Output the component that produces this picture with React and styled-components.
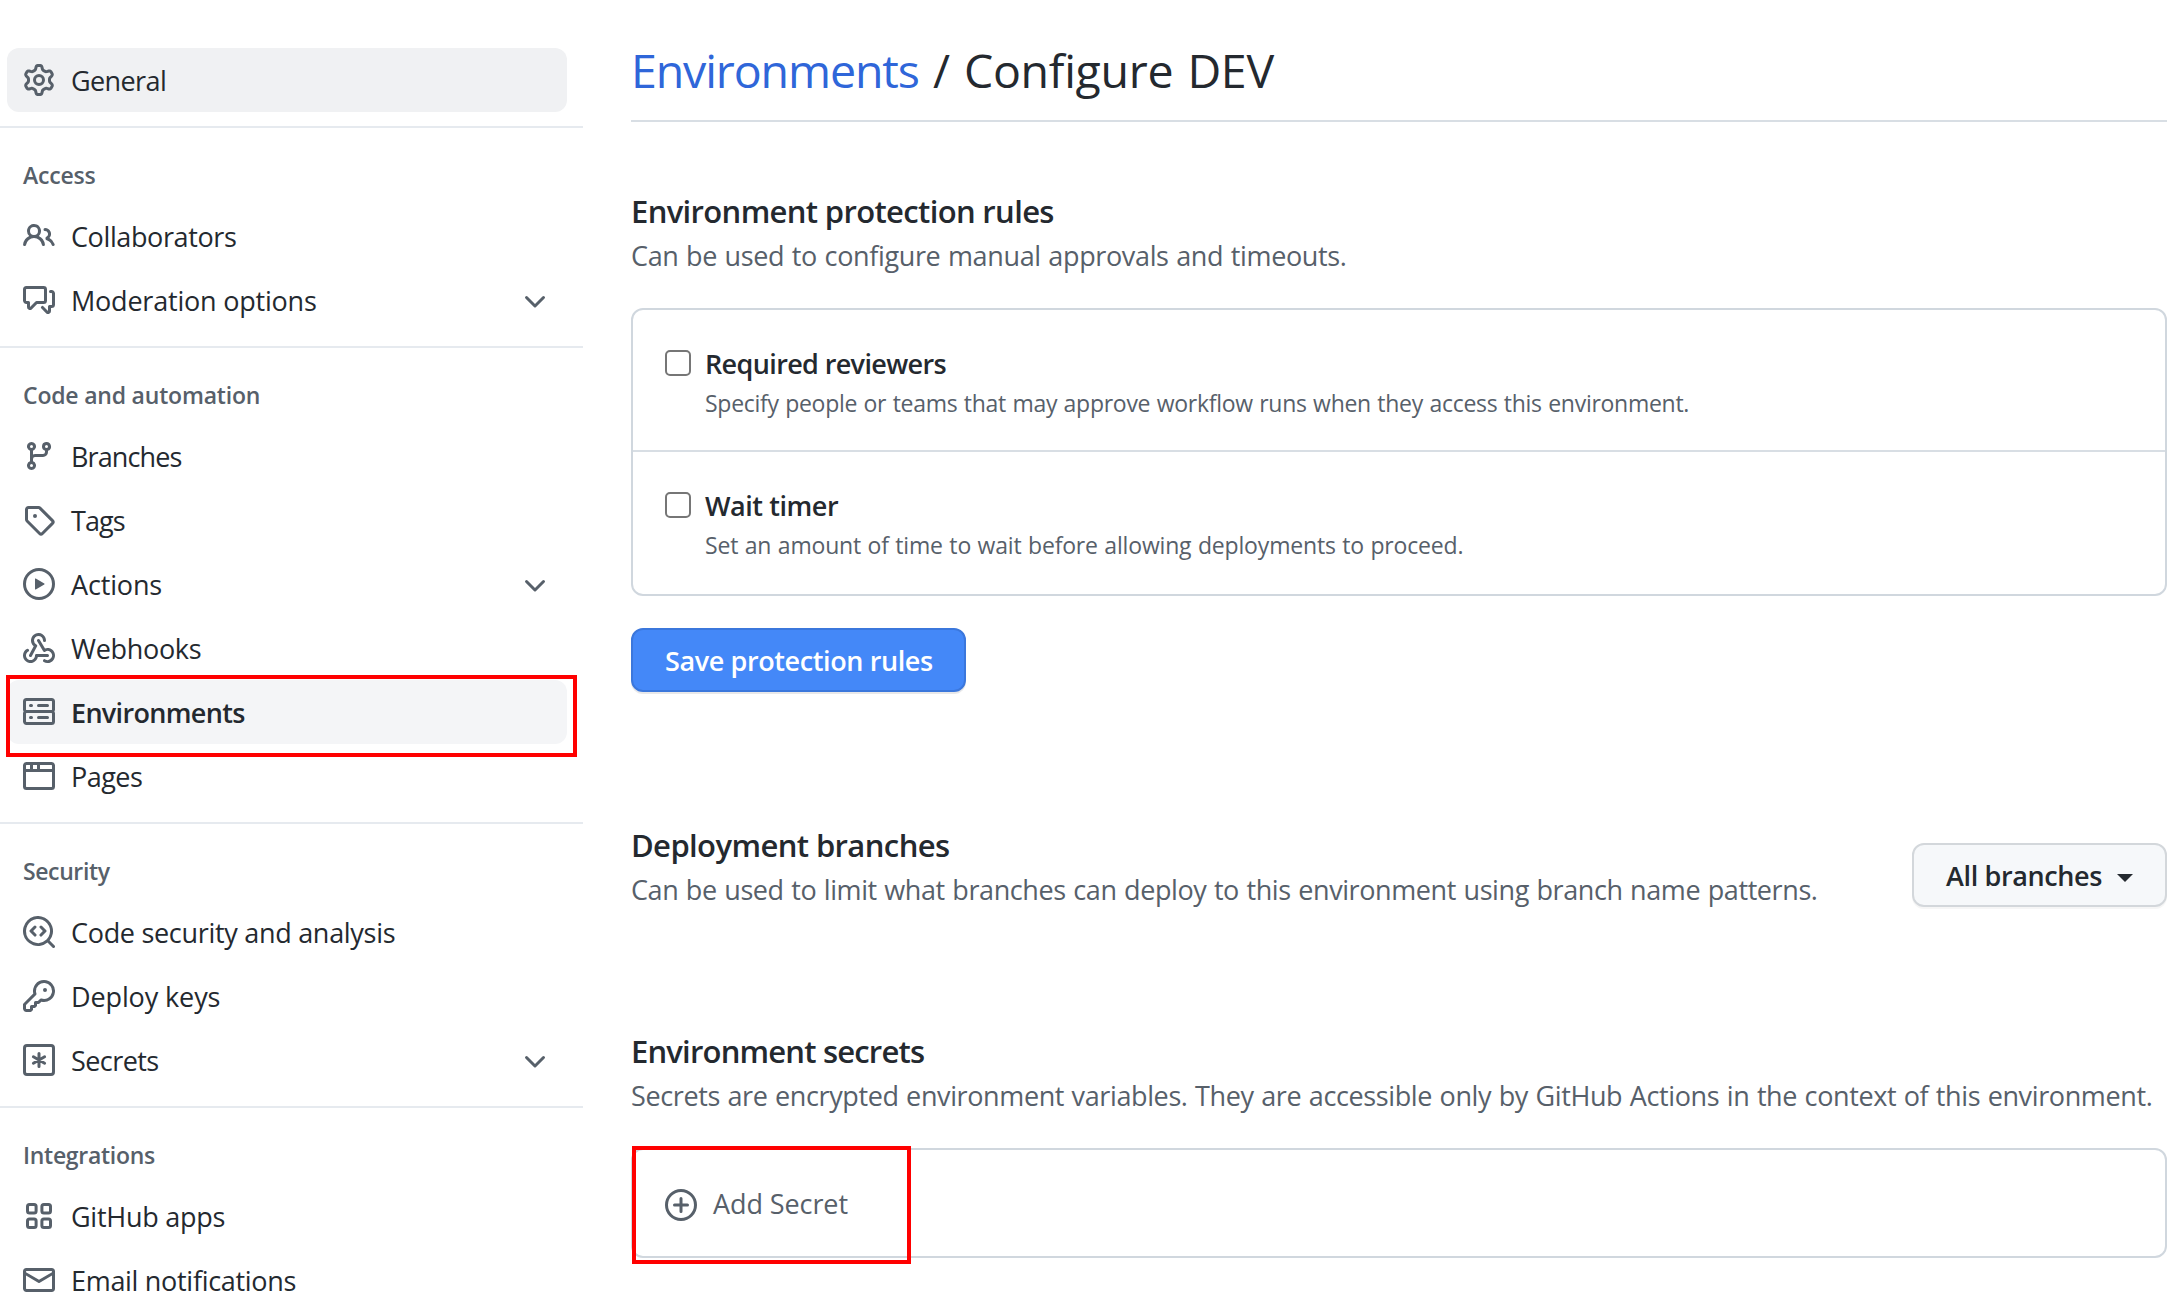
import React from 'react';
import styled, { createGlobalStyle, css } from 'styled-components';

const color = {
  text: '#24292f',
  muted: '#57606a',
  icon: '#57606a',
  border: '#d0d7de',
  divider: '#e6eaef',
  link: '#2f66d9',
  highlight: '#ff0000',
};

const GlobalStyle = createGlobalStyle`
  *, *::before, *::after { box-sizing: border-box; }
  html, body { margin: 0; padding: 0; background: #ffffff; overflow: hidden; }
  body {
    font-family: "Open Sans", "Noto Sans", sans-serif;
    font-size: 27px;
    color: ${color.text};
  }
`;

const Page = styled.div`
  display: grid;
  grid-template-columns: 583px 1fr;
  column-gap: 48px;
  height: 1307px;
  padding-right: 16px;
  overflow: hidden;
`;

/* ---------- Sidebar ---------- */

const Sidebar = styled.nav`
  padding-top: 48px;
`;

const NavGroup = styled.section`
  padding-bottom: 14px;

  & + & {
    border-top: 2px solid ${color.divider};
  }
`;

const NavHeading = styled.h3`
  margin: 0;
  height: 76px;
  padding: 29px 0 0 23px;
  font-size: 23px;
  line-height: 36px;
  font-weight: 600;
  color: ${color.muted};
  letter-spacing: ${(p) => p.$tracking}px;
`;

const NavList = styled.ul`
  margin: 0;
  padding: 0 16px 0 7px;
  list-style: none;
`;

const NavItem = styled.li`
  position: relative;
  display: flex;
  align-items: center;
  gap: 16px;
  height: 64px;
  padding: 0 16px;
  border-radius: 12px;
  background: ${(p) => p.$background || 'transparent'};
  font-weight: ${(p) => (p.$bold ? 600 : 400)};
`;

const NavLabel = styled.span`
  flex: 1;
  line-height: 42px;
  padding-top: 1px;
  white-space: nowrap;
  letter-spacing: ${(p) => p.$tracking}px;
`;

const NavHighlight = styled.span`
  position: absolute;
  left: -1px;
  top: -5px;
  width: 571px;
  height: 82px;
  border: 4px solid ${color.highlight};
`;

const Svg = styled.svg`
  display: block;
  flex: none;
  width: 32px;
  height: 32px;
  fill: ${color.icon};
`;

const Stroked = styled.g`
  fill: none;
  stroke: ${color.icon};
  stroke-width: 1.5;
  stroke-linecap: round;
  stroke-linejoin: round;
`;

/* ---------- Main column ---------- */

const PageHeader = styled.header`
  padding: 34px 0 14px;
  border-bottom: 2px solid #d8dee4;
`;

const Title = styled.h1`
  margin: 0;
  font-size: 46.5px;
  line-height: 72px;
  font-weight: 400;
  white-space: pre;
  letter-spacing: -0.3px;
  word-spacing: 2.4px;
`;

const TitleLink = styled.a`
  color: ${color.link};
  letter-spacing: -1.12px;
`;

const Section = styled.section`
  margin-top: ${(p) => p.$top}px;
`;

const SplitSection = styled(Section)`
  display: flex;
  justify-content: space-between;
  align-items: flex-end;
`;

const SectionTitle = styled.h2`
  margin: 0;
  font-size: 31px;
  line-height: 48px;
  font-weight: 600;
  letter-spacing: ${(p) => p.$tracking}px;
`;

const Description = styled.p`
  margin: 0;
  line-height: 42px;
  color: ${color.muted};
  white-space: nowrap;
  letter-spacing: ${(p) => p.$tracking}px;
  word-spacing: 0.9px;
`;

const Card = styled.div`
  position: relative;
  margin-top: 31px;
  border: 2px solid ${color.border};
  border-radius: 12px;
`;

const Rule = styled.label`
  display: flex;
  gap: 14px;
  padding: 32px 32px 29px;

  & + & {
    padding-bottom: 31px;
    border-top: 2px solid #d8dee4;
  }
`;

const Checkbox = styled.input`
  appearance: none;
  flex: none;
  width: 26px;
  height: 26px;
  margin: 8px 0 0;
  border: 2px solid #767676;
  border-radius: 5px;
  background: #ffffff;
`;

const RuleName = styled.div`
  padding-top: 1px;
  line-height: 42px;
  font-weight: 600;
  letter-spacing: ${(p) => p.$tracking}px;
`;

const RuleNote = styled.div`
  font-size: 23px;
  line-height: 36px;
  color: ${color.muted};
  white-space: nowrap;
  letter-spacing: ${(p) => p.$tracking}px;
  word-spacing: 0.7px;
`;

const buttonBase = css`
  display: flex;
  align-items: center;
  height: 64px;
  padding: 2px 32px 0;
  border-radius: 12px;
  font-family: inherit;
  font-size: 27px;
  line-height: 42px;
  font-weight: 600;
  white-space: nowrap;
`;

const PrimaryButton = styled.button`
  ${buttonBase}
  width: 335px;
  margin-top: 32px;
  border: 2px solid #3b77dc;
  background: #4488f8;
  color: #ffffff;
  letter-spacing: -0.39px;
  box-shadow: 0 2px 0 rgba(27, 31, 36, 0.1);
`;

const SelectButton = styled.button`
  ${buttonBase}
  width: 255px;
  margin-bottom: 4px;
  border: 2px solid #d3d7db;
  background: #f6f8fa;
  color: ${color.text};
  letter-spacing: -0.37px;
  box-shadow: 0 2px 0 rgba(27, 31, 36, 0.04);

  &::after {
    content: '';
    margin-left: 15px;
    margin-top: 4px;
    border: 8px solid transparent;
    border-top-color: currentColor;
    border-bottom: 0;
  }
`;

const AddSecret = styled.a`
  display: flex;
  align-items: center;
  gap: 16px;
  height: 106px;
  padding: 0 32px;
  color: ${color.muted};
  letter-spacing: -0.09px;

  ${Svg} {
    margin-top: 4px;
  }
`;

const AddSecretLabel = styled.span`
  padding-top: 1px;
`;

const CardHighlight = styled.span`
  position: absolute;
  left: -1px;
  top: -4px;
  width: 279px;
  height: 118px;
  border: 4px solid ${color.highlight};
`;

/* ---------- Icons ---------- */

const paths = {
  gear: 'M7.429 1.525a6.593 6.593 0 011.142 0c.036.003.108.036.137.146l.289 1.105c.147.56.55.967.997 1.189.174.086.341.183.501.29.417.278.97.423 1.53.27l1.102-.303c.11-.03.175.016.195.046.219.31.41.641.573.989.014.031.022.11-.059.19l-.815.806c-.411.406-.562.957-.53 1.456a4.588 4.588 0 010 .582c-.032.499.119 1.05.53 1.456l.815.806c.08.08.073.159.059.19a6.494 6.494 0 01-.573.99c-.02.029-.086.074-.195.045l-1.103-.303c-.559-.153-1.112-.008-1.529.27-.16.107-.327.204-.5.29-.449.222-.851.628-.998 1.189l-.289 1.105c-.029.11-.101.143-.137.146a6.613 6.613 0 01-1.142 0c-.036-.003-.108-.037-.137-.146l-.289-1.105c-.147-.56-.55-.967-.997-1.189a4.502 4.502 0 01-.501-.29c-.417-.278-.97-.423-1.53-.27l-1.102.303c-.11.03-.175-.016-.195-.046a6.492 6.492 0 01-.573-.989c-.014-.031-.022-.11.059-.19l.815-.806c.411-.406.562-.957.53-1.456a4.587 4.587 0 010-.582c.032-.499-.119-1.05-.53-1.456l-.815-.806c-.08-.08-.073-.159-.059-.19a6.44 6.44 0 01.573-.99c.02-.029.086-.075.195-.045l1.103.303c.559.153 1.112.008 1.529-.27.16-.107.327-.204.5-.29.449-.222.851-.628.998-1.189l.289-1.105c.029-.11.101-.143.137-.146zM8 0c-.236 0-.47.01-.701.03-.743.065-1.29.615-1.458 1.261l-.29 1.106c-.017.066-.078.158-.211.224a5.994 5.994 0 00-.668.386c-.123.082-.233.09-.3.071L3.27 2.776c-.644-.177-1.392.02-1.82.63a7.977 7.977 0 00-.704 1.217c-.315.675-.111 1.422.363 1.891l.815.806c.05.048.098.147.088.294a6.084 6.084 0 000 .772c.01.147-.038.246-.088.294l-.815.806c-.474.469-.678 1.216-.363 1.891.2.428.436.835.704 1.218.428.609 1.176.806 1.82.63l1.103-.303c.066-.019.176-.011.299.071.213.143.436.272.668.386.133.066.194.158.212.224l.289 1.106c.169.646.715 1.196 1.458 1.26a8.094 8.094 0 001.402 0c.743-.064 1.29-.614 1.458-1.26l.29-1.106c.017-.066.078-.158.211-.224a5.98 5.98 0 00.668-.386c.123-.082.233-.09.3-.071l1.102.302c.644.177 1.392-.02 1.82-.63.268-.382.505-.789.704-1.217.315-.675.111-1.422-.364-1.891l-.814-.806c-.05-.048-.098-.147-.088-.294a6.1 6.1 0 000-.772c-.01-.147.039-.246.088-.294l.814-.806c.475-.469.679-1.216.364-1.891a7.992 7.992 0 00-.704-1.218c-.428-.609-1.176-.806-1.82-.63l-1.103.303c-.066.019-.176.011-.299-.071a5.991 5.991 0 00-.668-.386c-.133-.066-.194-.158-.212-.224L10.16 1.29C9.99.645 9.444.095 8.701.031A8.094 8.094 0 008 0zm1.5 8a1.5 1.5 0 11-3 0 1.5 1.5 0 013 0zM11 8a3 3 0 11-6 0 3 3 0 016 0z',
  people: 'M5.5 3.5a2 2 0 100 4 2 2 0 000-4zM2 5.5a3.5 3.5 0 115.898 2.549 5.507 5.507 0 013.034 4.084.75.75 0 11-1.482.235 4.001 4.001 0 00-7.9 0 .75.75 0 01-1.482-.236A5.507 5.507 0 013.102 8.05 3.49 3.49 0 012 5.5zM11 4a.75.75 0 100 1.5 1.5 1.5 0 01.666 2.844.75.75 0 00-.416.672v.352a.75.75 0 00.574.73c1.2.289 2.162 1.2 2.522 2.372a.75.75 0 101.434-.44 5.01 5.01 0 00-2.56-3.012A3 3 0 0011 4z',
  discussion: 'M1.5 2.75a.25.25 0 01.25-.25h8.5a.25.25 0 01.25.25v5.5a.25.25 0 01-.25.25h-3.5a.75.75 0 00-.53.22L3.5 11.44V9.25a.75.75 0 00-.75-.75h-1a.25.25 0 01-.25-.25v-5.5zM1.75 1A1.75 1.75 0 000 2.75v5.5C0 9.216.784 10 1.75 10H2v1.543a1.457 1.457 0 002.487 1.03L7.061 10h3.189A1.75 1.75 0 0012 8.25v-5.5A1.75 1.75 0 0010.25 1h-8.5zM14.5 4.75a.25.25 0 00-.25-.25h-.5a.75.75 0 110-1.5h.5c.966 0 1.75.784 1.75 1.75v5.5A1.75 1.75 0 0114.25 12H14v1.543a1.457 1.457 0 01-2.487 1.03L9.22 12.28a.75.75 0 111.06-1.06l2.22 2.22v-2.19a.75.75 0 01.75-.75h1a.25.25 0 00.25-.25v-5.5z',
  branch: 'M11.75 2.5a.75.75 0 100 1.5.75.75 0 000-1.5zm-2.25.75a2.25 2.25 0 113 2.122V6A2.5 2.5 0 0110 8.5H6a1 1 0 00-1 1v1.128a2.251 2.251 0 11-1.5 0V5.372a2.25 2.25 0 111.5 0v1.836A2.492 2.492 0 016 7h4a1 1 0 001-1v-.628A2.25 2.25 0 019.5 3.25zM4.25 12a.75.75 0 100 1.5.75.75 0 000-1.5zM3.5 3.25a.75.75 0 111.5 0 .75.75 0 01-1.5 0z',
  tag: 'M2.5 7.775V2.75a.25.25 0 01.25-.25h5.025a.25.25 0 01.177.073l6.25 6.25a.25.25 0 010 .354l-5.025 5.025a.25.25 0 01-.354 0l-6.25-6.25a.25.25 0 01-.073-.177zm-1.5 0V2.75C1 1.784 1.784 1 2.75 1h5.025c.464 0 .91.184 1.238.513l6.25 6.25a1.75 1.75 0 010 2.474l-5.026 5.026a1.75 1.75 0 01-2.474 0l-6.25-6.25A1.75 1.75 0 011 7.775zM6 5a1 1 0 100 2 1 1 0 000-2z',
  play: 'M1.5 8a6.5 6.5 0 1113 0 6.5 6.5 0 01-13 0zM8 0a8 8 0 100 16A8 8 0 008 0zM6.379 5.227A.25.25 0 006 5.442v5.117a.25.25 0 00.379.214l4.264-2.559a.25.25 0 000-.428L6.379 5.227z',
  webhook: 'M5.5 4.25a2.25 2.25 0 014.5 0 .75.75 0 001.5 0 3.75 3.75 0 10-6.14 2.889l-2.272 4.258a.75.75 0 001.324.706L7 7.25a.75.75 0 00-.309-1.015A2.25 2.25 0 015.5 4.25zM7.364 3.607a.75.75 0 011.03.257l2.608 4.349a3.75 3.75 0 11-.628 6.785.75.75 0 01.752-1.299 2.25 2.25 0 10-.033-3.88.75.75 0 01-1.03-.256L7.107 4.636a.75.75 0 01.257-1.03zM2.9 8.776A.75.75 0 012.625 9.8 2.25 2.25 0 106 11.75a.75.75 0 01.75-.751h5.5a.75.75 0 010 1.5H7.425a3.751 3.751 0 11-5.55-3.998.75.75 0 011.024.274z',
  server: 'M1.75 1A1.75 1.75 0 000 2.75v4c0 .372.116.717.314 1a1.742 1.742 0 00-.314 1v4c0 .966.784 1.75 1.75 1.75h12.5A1.75 1.75 0 0016 12.75v-4c0-.372-.116-.717-.314-1 .198-.283.314-.628.314-1v-4A1.75 1.75 0 0014.25 1H1.75zm0 7.5a.25.25 0 00-.25.25v4c0 .138.112.25.25.25h12.5a.25.25 0 00.25-.25v-4a.25.25 0 00-.25-.25H1.75zM1.5 2.75a.25.25 0 01.25-.25h12.5a.25.25 0 01.25.25v4a.25.25 0 01-.25.25H1.75a.25.25 0 01-.25-.25v-4zm5.5 2A.75.75 0 017.75 4h4.5a.75.75 0 010 1.5h-4.5A.75.75 0 017 4.75zM7.75 10a.75.75 0 000 1.5h4.5a.75.75 0 000-1.5h-4.5zM3 4.75A.75.75 0 013.75 4h.5a.75.75 0 010 1.5h-.5A.75.75 0 013 4.75zM3.75 10a.75.75 0 000 1.5h.5a.75.75 0 000-1.5h-.5z',
  browser: 'M0 2.75C0 1.784.784 1 1.75 1h12.5c.966 0 1.75.784 1.75 1.75v10.5A1.75 1.75 0 0114.25 15H1.75A1.75 1.75 0 010 13.25V2.75zm1.75-.25a.25.25 0 00-.25.25V4.5h2v-2H1.75zM5 2.5v2h2v-2H5zm3.5 0v2h6V2.75a.25.25 0 00-.25-.25H8.5zm6 3.5h-13v7.25c0 .138.112.25.25.25h12.5a.25.25 0 00.25-.25V6z',
  codescan: 'M8.47 4.97a.75.75 0 000 1.06L9.94 7.5 8.47 8.97a.75.75 0 101.06 1.06l2-2a.75.75 0 000-1.06l-2-2a.75.75 0 00-1.06 0zM6.53 6.03a.75.75 0 00-1.06-1.06l-2 2a.75.75 0 000 1.06l2 2a.75.75 0 101.06-1.06L5.06 7.5l1.47-1.47zM12.246 13.307a7.5 7.5 0 111.06-1.06l2.474 2.473a.75.75 0 11-1.06 1.06l-2.474-2.473zM1.5 7.5a6 6 0 1110.386 4.094.75.75 0 00-.292.293A6 6 0 011.5 7.5z',
  key: 'M6.5 5.5a4 4 0 112.731 3.795.75.75 0 00-.768.18L7.44 10.5H6.25a.75.75 0 00-.75.75v1.19l-.06.06H4.25a.75.75 0 00-.75.75v1.19l-.06.06H1.75a.25.25 0 01-.25-.25v-1.69l5.024-5.023a.75.75 0 00.181-.768A3.995 3.995 0 016.5 5.5zm4-5.5a5.5 5.5 0 00-5.348 6.788L.22 11.72a.75.75 0 00-.22.53v2C0 15.216.784 16 1.75 16h2a.75.75 0 00.53-.22l.5-.5a.75.75 0 00.22-.53V14h.75a.75.75 0 00.53-.22l.5-.5a.75.75 0 00.22-.53V12h.75a.75.75 0 00.53-.22l.932-.932A5.5 5.5 0 1010.5 0zm.5 6a1 1 0 100-2 1 1 0 000 2z',
  mail: 'M1.75 2A1.75 1.75 0 000 3.75v.736a.75.75 0 000 .027v7.737C0 13.216.784 14 1.75 14h12.5A1.75 1.75 0 0016 12.25v-8.5A1.75 1.75 0 0014.25 2H1.75zM14.5 4.07v-.32a.25.25 0 00-.25-.25H1.75a.25.25 0 00-.25.25v.32L8 7.88l6.5-3.81zm-13 1.74v6.441c0 .138.112.25.25.25h12.5a.25.25 0 00.25-.25V5.809L8.38 9.397a.75.75 0 01-.76 0L1.5 5.809z',
  chevron: 'M12.78 6.22a.75.75 0 010 1.06l-4.25 4.25a.75.75 0 01-1.06 0L3.22 7.28a.75.75 0 011.06-1.06L8 9.94l3.72-3.72a.75.75 0 011.06 0z',
};

const drawings = {
  secrets: (
    <Stroked>
      <rect x="0.75" y="0.75" width="14.5" height="14.5" rx="1.25" />
      <path d="M8 4.75v6.5M5.2 6.4l5.6 3.2M10.8 6.4l-5.6 3.2" />
    </Stroked>
  ),
  apps: (
    <Stroked>
      <rect x="2.25" y="2.25" width="4.3" height="4.3" rx="1" />
      <rect x="9.45" y="2.25" width="4.3" height="4.3" rx="1" />
      <rect x="2.25" y="9.45" width="4.3" height="4.3" rx="1" />
      <rect x="9.45" y="9.45" width="4.3" height="4.3" rx="1" />
    </Stroked>
  ),
  plus: (
    <Stroked>
      <circle cx="8" cy="8" r="7.25" />
      <path d="M8 4.75v6.5M4.75 8h6.5" />
    </Stroked>
  ),
};

function Icon({ name }) {
  return (
    <Svg viewBox="0 0 16 16" aria-hidden="true">
      {drawings[name] || <path fillRule="evenodd" d={paths[name]} />}
    </Svg>
  );
}

/* ---------- Data ---------- */

const groups = [
  {
    items: [{ icon: 'gear', label: 'General', tracking: -0.6, background: '#f0f1f3' }],
  },
  {
    heading: 'Access',
    tracking: -0.22,
    items: [
      { icon: 'people', label: 'Collaborators', tracking: -0.39 },
      { icon: 'discussion', label: 'Moderation options', tracking: -0.21, expandable: true },
    ],
  },
  {
    heading: 'Code and automation',
    tracking: -0.2,
    items: [
      { icon: 'branch', label: 'Branches', tracking: -0.87 },
      { icon: 'tag', label: 'Tags', tracking: -0.95 },
      { icon: 'play', label: 'Actions', tracking: -0.15, expandable: true },
      { icon: 'webhook', label: 'Webhooks', tracking: -0.3 },
      {
        icon: 'server',
        label: 'Environments',
        tracking: -0.68,
        background: '#f4f5f7',
        bold: true,
        highlighted: true,
      },
      { icon: 'browser', label: 'Pages', tracking: -0.52 },
    ],
  },
  {
    heading: 'Security',
    tracking: -0.39,
    items: [
      { icon: 'codescan', label: 'Code security and analysis', tracking: -0.3 },
      { icon: 'key', label: 'Deploy keys', tracking: -0.12 },
      { icon: 'secrets', label: 'Secrets', tracking: -0.56, expandable: true },
    ],
  },
  {
    heading: 'Integrations',
    tracking: -0.28,
    items: [
      { icon: 'apps', label: 'GitHub apps', tracking: -0.26 },
      { icon: 'mail', label: 'Email notifications', tracking: -0.3 },
    ],
  },
];

const rules = [
  {
    name: 'Required reviewers',
    tracking: -0.63,
    note: 'Specify people or teams that may approve workflow runs when they access this environment.',
    noteTracking: -0.273,
  },
  {
    name: 'Wait timer',
    tracking: -0.45,
    note: 'Set an amount of time to wait before allowing deployments to proceed.',
    noteTracking: -0.17,
  },
];

export default function App() {
  return (
    <>
      <GlobalStyle />
      <Page>
        <Sidebar>
          {groups.map((group, i) => (
            <NavGroup key={i}>
              {group.heading && <NavHeading $tracking={group.tracking}>{group.heading}</NavHeading>}
              <NavList>
                {group.items.map((item) => (
                  <NavItem key={item.label} $background={item.background} $bold={item.bold}>
                    <Icon name={item.icon} />
                    <NavLabel $tracking={item.tracking}>{item.label}</NavLabel>
                    {item.expandable && <Icon name="chevron" />}
                    {item.highlighted && <NavHighlight />}
                  </NavItem>
                ))}
              </NavList>
            </NavGroup>
          ))}
        </Sidebar>

        <main>
          <PageHeader>
            <Title>
              <TitleLink>Environments</TitleLink> / Configure DEV
            </Title>
          </PageHeader>

          <Section $top={65}>
            <SectionTitle $tracking={-0.65}>Environment protection rules</SectionTitle>
            <Description $tracking={-0.355}>
              Can be used to configure manual approvals and timeouts.
            </Description>
            <Card>
              {rules.map((rule) => (
                <Rule key={rule.name}>
                  <Checkbox type="checkbox" />
                  <div>
                    <RuleName $tracking={rule.tracking}>{rule.name}</RuleName>
                    <RuleNote $tracking={rule.noteTracking}>{rule.note}</RuleNote>
                  </div>
                </Rule>
              ))}
            </Card>
            <PrimaryButton>Save protection rules</PrimaryButton>
          </Section>

          <SplitSection $top={129}>
            <div>
              <SectionTitle $tracking={-0.6}>Deployment branches</SectionTitle>
              <Description $tracking={-0.405}>
                Can be used to limit what branches can deploy to this environment using branch name patterns.
              </Description>
            </div>
            <SelectButton>All branches</SelectButton>
          </SplitSection>

          <Section $top={116}>
            <SectionTitle $tracking={-0.81}>Environment secrets</SectionTitle>
            <Description $tracking={-0.384}>
              Secrets are encrypted environment variables. They are accessible only by GitHub Actions in the
              context of this environment.
            </Description>
            <Card>
              <AddSecret>
                <Icon name="plus" />
                <AddSecretLabel>Add Secret</AddSecretLabel>
              </AddSecret>
              <CardHighlight />
            </Card>
          </Section>
        </main>
      </Page>
    </>
  );
}
